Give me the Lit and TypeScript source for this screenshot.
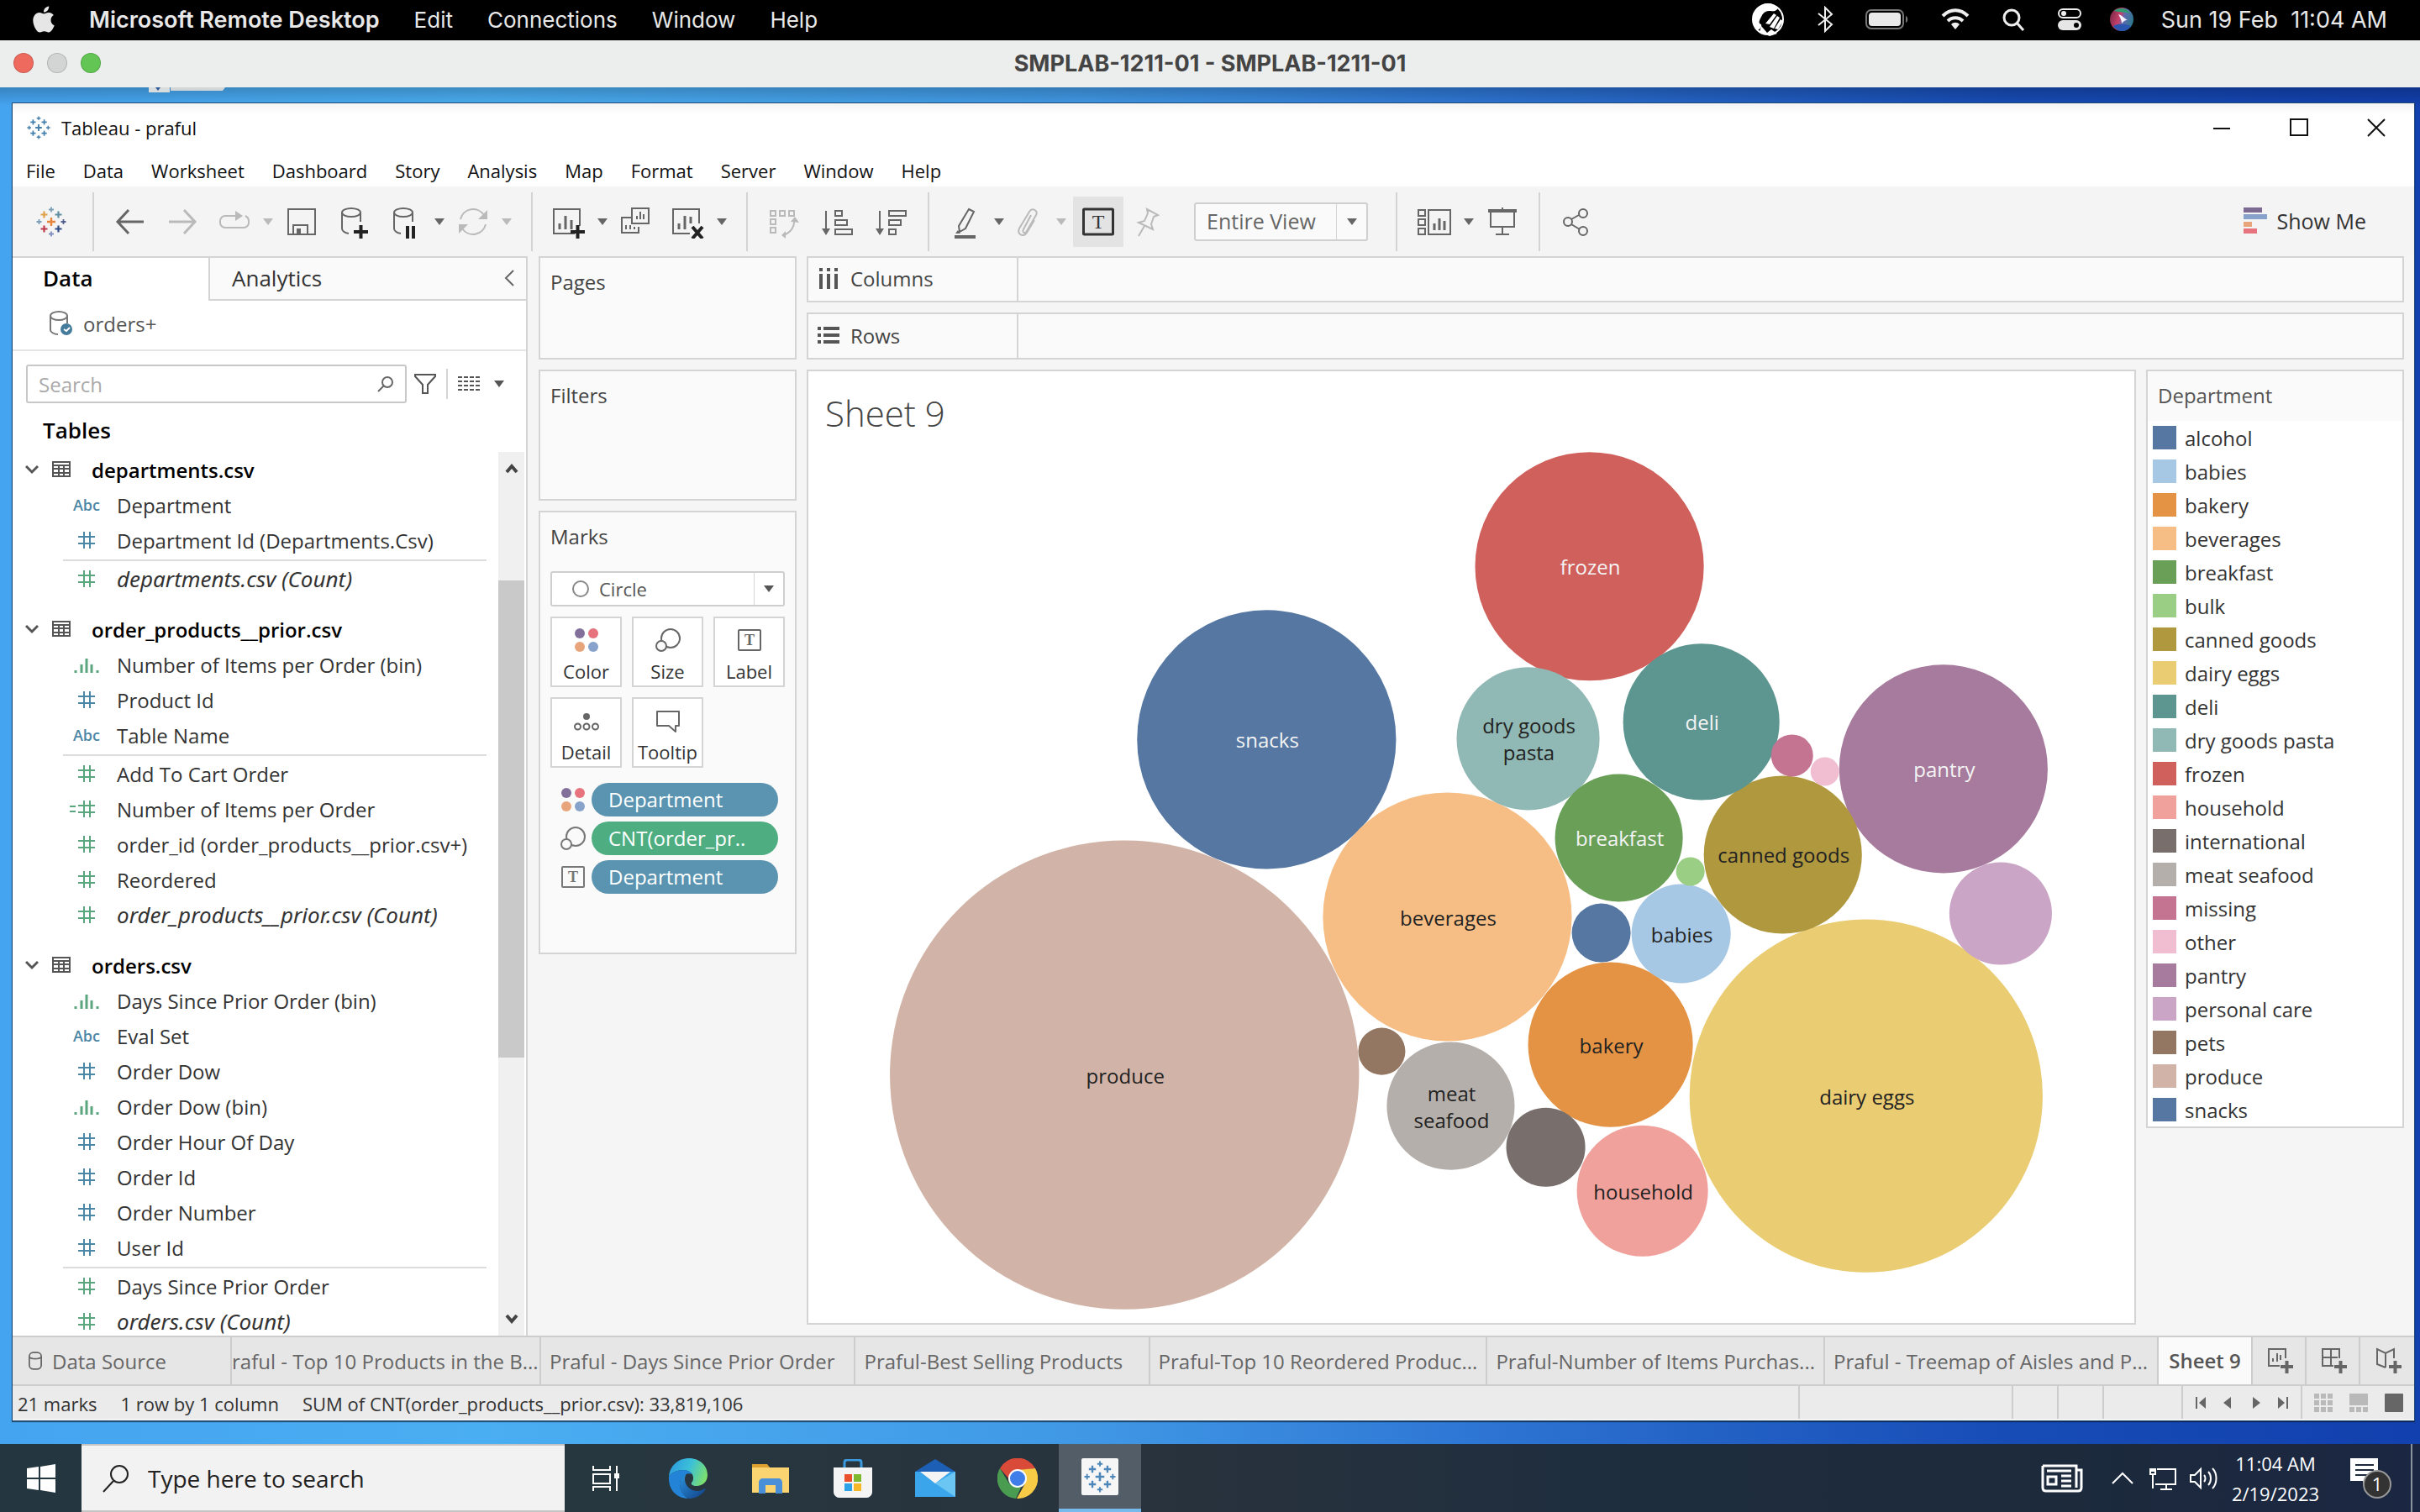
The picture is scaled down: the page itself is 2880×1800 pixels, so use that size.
import { LitElement, html, svg, css } from "lit";
import type { TemplateResult } from "lit";
import { customElement, property } from "lit/decorators.js";
import { classMap } from "lit/directives/class-map.js";
import { styleMap } from "lit/directives/style-map.js";

/* ---------- data ---------- */

const LEGEND: [string, string][] = [
  ["alcohol", "#5577a2"],
  ["babies", "#a7c8e4"],
  ["bakery", "#e49244"],
  ["beverages", "#f6be85"],
  ["breakfast", "#6a9f58"],
  ["bulk", "#9ace85"],
  ["canned goods", "#b0983f"],
  ["dairy eggs", "#eacc73"],
  ["deli", "#5d9590"],
  ["dry goods pasta", "#90b8b4"],
  ["frozen", "#d0605c"],
  ["household", "#f1a19b"],
  ["international", "#786f6d"],
  ["meat seafood", "#b5afab"],
  ["missing", "#c47491"],
  ["other", "#f0bed0"],
  ["pantry", "#a77b9d"],
  ["personal care", "#caa5c5"],
  ["pets", "#947763"],
  ["produce", "#d1b4a7"],
  ["snacks", "#5577a2"],
];
const COLOR = new Map(LEGEND);

interface Bubble {
  name: string;
  x: number;
  y: number;
  r: number;
  lines?: string[];
  light?: boolean;
}

const BUBBLES: Bubble[] = [
  { name: "produce", x: 1339, y: 1279, r: 279, lines: ["produce"] },
  { name: "dairy eggs", x: 2221, y: 1304, r: 210, lines: ["dairy eggs"] },
  { name: "snacks", x: 1508, y: 880, r: 154, lines: ["snacks"], light: true },
  { name: "beverages", x: 1723, y: 1091, r: 148, lines: ["beverages"] },
  { name: "frozen", x: 1892, y: 674, r: 136, lines: ["frozen"], light: true },
  { name: "pantry", x: 2313, y: 915, r: 124, lines: ["pantry"], light: true },
  { name: "bakery", x: 1917, y: 1243, r: 98, lines: ["bakery"] },
  { name: "canned goods", x: 2122, y: 1017, r: 94, lines: ["canned goods"] },
  { name: "deli", x: 2025, y: 859, r: 93, lines: ["deli"], light: true },
  { name: "dry goods pasta", x: 1819, y: 879, r: 85, lines: ["dry goods", "pasta"] },
  { name: "household", x: 1955, y: 1417, r: 78, lines: ["household"] },
  { name: "breakfast", x: 1927, y: 997, r: 76, lines: ["breakfast"], light: true },
  { name: "meat seafood", x: 1727, y: 1316, r: 76, lines: ["meat", "seafood"] },
  { name: "personal care", x: 2381, y: 1087, r: 61 },
  { name: "babies", x: 2001, y: 1111, r: 59, lines: ["babies"] },
  { name: "international", x: 1840, y: 1365, r: 47 },
  { name: "alcohol", x: 1906, y: 1110, r: 35 },
  { name: "pets", x: 1645, y: 1251, r: 28 },
  { name: "missing", x: 2133, y: 899, r: 25 },
  { name: "bulk", x: 2012, y: 1037, r: 17 },
  { name: "other", x: 2172, y: 918, r: 17 },
];

type FieldKind = "abc" | "num" | "measure" | "calc" | "bin";
interface Field {
  kind: FieldKind;
  label: string;
  italic?: boolean;
}
interface TableGroup {
  name: string;
  dimensions: Field[];
  measures: Field[];
}

const f = (kind: FieldKind, label: string, italic = false): Field => ({ kind, label, italic });

const TABLES: TableGroup[] = [
  {
    name: "departments.csv",
    dimensions: [f("abc", "Department"), f("num", "Department Id (Departments.Csv)")],
    measures: [f("measure", "departments.csv (Count)", true)],
  },
  {
    name: "order_products__prior.csv",
    dimensions: [
      f("bin", "Number of Items per Order (bin)"),
      f("num", "Product Id"),
      f("abc", "Table Name"),
    ],
    measures: [
      f("measure", "Add To Cart Order"),
      f("calc", "Number of Items per Order"),
      f("measure", "order_id (order_products__prior.csv+)"),
      f("measure", "Reordered"),
      f("measure", "order_products__prior.csv (Count)", true),
    ],
  },
  {
    name: "orders.csv",
    dimensions: [
      f("bin", "Days Since Prior Order (bin)"),
      f("abc", "Eval Set"),
      f("num", "Order Dow"),
      f("bin", "Order Dow (bin)"),
      f("num", "Order Hour Of Day"),
      f("num", "Order Id"),
      f("num", "Order Number"),
      f("num", "User Id"),
    ],
    measures: [f("measure", "Days Since Prior Order"), f("measure", "orders.csv (Count)", true)],
  },
];

/* ---------- icons ---------- */

const icon = (w: number, h: number, body: unknown, cls = "") => html`<svg
  class="icon ${cls}"
  width=${w}
  height=${h}
  viewBox="0 0 ${w} ${h}"
  fill="none"
  stroke="currentColor"
  stroke-width="2"
  aria-hidden="true"
>
  ${body}
</svg>`;

const caret = html`<svg class="icon caret" width="12" height="8" viewBox="0 0 12 8" aria-hidden="true">
  <path d="M0 0h12L6 8z" fill="currentColor" />
</svg>`;

const plusMark = (x: number, y: number, s: number, color: string, w = 2) =>
  svg`<path d="M${x - s} ${y}h${2 * s}M${x} ${y - s}v${2 * s}" stroke=${color} stroke-width=${w} />`;

const tableauMark = (w: number, mono = "") => html`<svg
  class="icon"
  width=${w}
  height=${w}
  viewBox="0 0 36 36"
  fill="none"
  aria-hidden="true"
>
  ${plusMark(18, 18, 5, mono || "#e8853b", 2.4)} ${plusMark(18, 3.5, 3, mono || "#7ba0b5", 1.8)}
  ${plusMark(18, 32.5, 3, mono || "#7f8fbf", 1.8)} ${plusMark(3.5, 18, 3, mono || "#7ba0b5", 1.8)}
  ${plusMark(32.5, 18, 3, mono || "#54608f", 1.8)} ${plusMark(9.5, 9.5, 4, mono || "#e0a04a", 2.2)}
  ${plusMark(26.5, 9.5, 4, mono || "#5f8fa0", 2.2)} ${plusMark(9.5, 26.5, 4, mono || "#c03a4e", 2.2)}
  ${plusMark(26.5, 26.5, 4, mono || "#2e4b86", 2.2)}
</svg>`;

const TOOL: Record<string, TemplateResult> = {
  back: icon(40, 40, svg`<path d="M5 20h31M18 6L5 20l13 14" stroke-width="3" />`),
  forward: icon(40, 40, svg`<path d="M4 20h31M22 6l13 14-13 14" stroke-width="3" />`),
  replay: icon(40, 40, svg`<path d="M22 13H9a6 6 0 0 0-6 6v2a6 6 0 0 0 6 6h22a6 6 0 0 0 6-6v-2c0-3-2-5-4-6" /><path d="M21 7l9 6-9 6z" fill="currentColor" stroke="none" />`),
  save: icon(40, 40, svg`<path d="M4 5h32v30H4zM10 35V24h17v11" /><path d="M14 28h5v7h-5z" fill="currentColor" stroke="none" />`),
  addSource: icon(40, 40, svg`<ellipse cx="17" cy="9" rx="11" ry="5" /><path d="M6 9v19c0 3 3 5 8 6M28 9v11" /><path d="M20 32h17M28.500 24v17" stroke="#222" stroke-width="4" />`),
  pause: icon(40, 40, svg`<ellipse cx="17" cy="9" rx="11" ry="5" /><path d="M6 9v19c0 3 3 5 8 6M28 9v11" /><path d="M22 25v15M29 25v15" stroke="#222" stroke-width="4" />`),
  refresh: icon(40, 40, svg`<path d="M5 17A15.500 15.500 0 0 1 33 12M35 23A15.500 15.500 0 0 1 7 28" /><path d="M37 6v11H26zM3 34V23h11z" fill="currentColor" stroke="none" />`),
  newSheet: icon(40, 40, svg`<path d="M27 34H2V5h31v20" /><path d="M9 29v-7M16 29V13M23 29v-11" stroke-width="3" /><path d="M22 32h17M30.500 24v17" stroke="#222" stroke-width="4" />`),
  duplicate: icon(40, 40, svg`<path d="M15 4h20v18H15zM15 15H3v18h20v-7" /><path d="M21 17v-4M25 17V8M29 17v-6M8 29v-5M13 29v-5M18 29v-3" />`),
  clear: icon(40, 40, svg`<path d="M22 34H2V5h31v17" /><path d="M9 29v-7M16 29V13M23 22v-8" stroke-width="3" /><path d="M25 26l12 14M37 26L25 40" stroke="#222" stroke-width="4" />`),
  swap: icon(40, 40, svg`<path d="M4 7h6v6H4zM15 7h6v6h-6zM26 7h6v6h-6zM4 17h6v6H4zM4 27h6v6H4zM32 18c1 8-4 15-13 18" /><path d="M28 20l5-6 5 7zM22 31l-5 5 5 4z" fill="currentColor" stroke="none" />`),
  sortAsc: icon(40, 40, svg`<path d="M6 7v24" /><path d="M1 28h10L6 36z" fill="currentColor" stroke="none" /><path d="M17 7h8v6h-8zM17 18h14v6H17zM17 29h20v6H17z" />`),
  sortDesc: icon(40, 40, svg`<path d="M6 7v24" /><path d="M1 28h10L6 36z" fill="currentColor" stroke="none" /><path d="M17 7h20v6H17zM17 18h14v6H17zM17 29h8v6h-8z" />`),
  highlight: icon(40, 40, svg`<path d="M24 5l6 3-10 20-7 4-1-7z" /><path d="M11 30l-3 4h6z" fill="currentColor" stroke="none" /><path d="M7 38h25" stroke-width="4" />`),
  clip: icon(40, 40, svg`<path d="M24 12l-9 17c-2 4 2 6 4 2l11-19c3-6-5-9-8-4L10 28c-3 7 5 11 9 5l9-15" />`),
  label: icon(40, 40, svg`<rect x="2.500" y="5" width="35" height="30" rx="1" stroke-width="3" /><text x="20" y="28" text-anchor="middle" class="serif" font-size="24" fill="currentColor" stroke="none">T</text>`),
  pin: icon(40, 40, svg`<path d="M20 5l13 7-5 2-3 9 2 6-17-8 7-2 4-9zM17 25l-7 12" />`),
  cards: icon(42, 40, svg`<path d="M2 6h8v7H2zM2 17h8v7H2zM2 28h8v7H2zM14 6h26v29H14z" /><path d="M21 30v-8M27 30V16M33 30V19" stroke-width="3" />`),
  present: icon(40, 40, svg`<path d="M3 7h34" stroke-width="4" /><path d="M6 7v19h28V7M20 26v9M12 35h16M20 3v4" />`),
  share: icon(40, 40, svg`<circle cx="10" cy="20" r="5" /><circle cx="28" cy="10" r="5" /><circle cx="28" cy="31" r="5" /><path d="M14 17l9-5M14 23l10 6" />`),
};

const markColor = html`<svg class="icon" width="30" height="30" viewBox="0 0 30 30" aria-hidden="true">
  <circle cx="7" cy="7" r="6" fill="#83709a" /><circle cx="23" cy="7" r="6" fill="#e6737d" />
  <circle cx="7" cy="23" r="6" fill="#e8a57c" /><circle cx="23" cy="23" r="6" fill="#87a3cb" />
</svg>`;
const markSize = icon(30, 30, svg`<circle cx="18" cy="13" r="11" /><circle cx="7" cy="22" r="6" fill="#fafafa" />`);
const markLabel = icon(30, 30, svg`<rect x="2" y="3" width="26" height="24" rx="1" /><text x="15" y="21" text-anchor="middle" class="serif" font-size="18" font-weight="bold" fill="currentColor" stroke="none">T</text>`);
const markDetail = icon(30, 30, svg`<circle cx="15" cy="10" r="4" fill="currentColor" stroke="none" /><circle cx="4.500" cy="22" r="3.500" /><circle cx="15" cy="22" r="3.500" /><circle cx="25.500" cy="22" r="3.500" />`);
const markTooltip = icon(30, 30, svg`<path d="M2 4h26v17h-4v7l-8-7H2z" stroke-linejoin="round" />`);

const dbIcon = (w: number, h: number) => html`<svg class="icon" width=${w} height=${h} viewBox="0 0 18 24" fill="none" stroke="currentColor" stroke-width="2" aria-hidden="true">
  <rect x="1" y="1" width="16" height="22" rx="5" /><path d="M1 7c3 3 13 3 16 0" />
</svg>`;

const hash = icon(22, 22, svg`<path d="M1 7h20M1 15h20M8 1v20M15 1v20" />`);
const hashCalc = icon(31, 22, svg`<path d="M10 7h20M10 15h20M17 1v20M24 1v20M0 8h7M0 14h7" />`);
const binIcon = icon(30, 22, svg`<path d="M2 18v3M9 11v10M15 4v17M21 11v10M28 18v3" stroke-width="3" />`);
const tableIcon = icon(22, 20, svg`<path d="M1 1h20v17H1zM1 5h20M1 9h20M1 14h20M8 5v13M14 5v13" />`);
const chevron = icon(16, 12, svg`<path d="M1 2l7 7 7-7" stroke-width="3" />`);

/* ---------- shared styles ---------- */

const shared = css`
  *,
  *::before,
  *::after {
    box-sizing: border-box;
  }
  button,
  input,
  select {
    font: inherit;
    color: inherit;
    background: none;
    border: 0;
    border-radius: 0;
    padding: 0;
    margin: 0;
  }
  ul {
    list-style: none;
    margin: 0;
    padding: 0;
  }
  h1,
  h2,
  h3 {
    margin: 0;
    font: inherit;
  }
  .icon {
    display: block;
    flex: none;
  }
  .serif {
    font-family: "Liberation Serif", serif;
  }
`;

/* ---------- host menu bar ---------- */

@customElement("mac-menu-bar")
class MacMenuBar extends LitElement {
  static styles = [
    shared,
    css`
      :host {
        display: block;
        font-family: Inter, sans-serif;
        font-size: 26px;
      }
      .bar {
        height: 48px;
        background: #000;
        color: #e8e8e8;
        display: flex;
        align-items: center;
        justify-content: space-between;
        padding: 0 39px 2px;
      }
      .menus,
      .status,
      .clock {
        display: flex;
        align-items: center;
      }
      .menus {
        gap: 41px;
      }
      .status {
        gap: 38px;
      }
      .clock {
        gap: 32px;
      }
      .app {
        font-size: 27px;
        font-weight: 600;
      }
      .time {
        font-size: 27px;
        white-space: pre;
      }
      .title {
        height: 56px;
        background: #eceeed;
        display: grid;
        grid-template-columns: 1fr auto 1fr;
        align-items: center;
        padding: 0 16px 2px;
        color: #444;
        font-size: 27px;
        font-weight: 700;
      }
      .lights {
        display: flex;
        gap: 16px;
      }
      .light {
        width: 24px;
        height: 24px;
        border-radius: 50%;
        border: 1px solid rgb(0 0 0 / 15%);
      }
      .close {
        background: #ee6a5f;
      }
      .minimise {
        background: #d3d5d4;
      }
      .zoom {
        background: #62c554;
      }
    `,
  ];

  render() {
    return html`
      <nav class="bar" aria-label="System menu">
        <div class="menus">
          <svg class="icon" width="26" height="32" viewBox="2 0 20 24" fill="#e6e6e6" aria-hidden="true">
            <path
              d="M12.152 6.896c-.948 0-2.415-1.078-3.960-1.040-2.040.027-3.910 1.183-4.961 3.014-2.117 3.675-.546 9.103 1.519 12.090 1.013 1.454 2.208 3.090 3.792 3.039 1.520-.065 2.090-.987 3.935-.987 1.831 0 2.350.987 3.960.948 1.637-.026 2.676-1.480 3.676-2.948 1.156-1.688 1.636-3.325 1.662-3.415-.039-.013-3.182-1.221-3.220-4.857-.026-3.040 2.480-4.494 2.597-4.559-1.429-2.090-3.623-2.324-4.390-2.376-2-.156-3.675 1.090-4.610 1.090zM15.530 3.830c.843-1.012 1.400-2.427 1.245-3.830-1.207.052-2.662.805-3.532 1.818-.780.896-1.454 2.338-1.273 3.714 1.338.104 2.715-.688 3.559-1.701"
            />
          </svg>
          <button class="app">Microsoft Remote Desktop</button>
          <button>Edit</button>
          <button>Connections</button>
          <button>Window</button>
          <button>Help</button>
        </div>
        <div class="status">
          <svg class="icon" width="40" height="40" viewBox="0 0 40 40" aria-hidden="true">
            <circle cx="20" cy="20" r="18" fill="#000" stroke="#fff" stroke-width="2" />
            <path d="M20 1A19 19 0 0 0 7 33c3-1 6-3 5-7-4-1-2-5-1-7 2-4 4-10 12-9 6 1 8-1 9-4A19 19 0 0 0 20 1z" fill="#fff" />
            <path d="M17 25L27 13l3 2-8 11zM22 29l9-13 3 2-7 13zM28 31l7-11 3 2-6 10zM12 28l7 8 5-4 7 5-9 3-12-5z" fill="#fff" />
          </svg>
          <svg class="icon" width="20" height="32" viewBox="0 0 20 32" fill="none" stroke="#eee" stroke-width="2" aria-hidden="true">
            <path d="M2 9l16 13-8 8V2l8 8L2 23" />
          </svg>
          <svg class="icon" width="52" height="26" viewBox="0 0 52 26" fill="none" aria-hidden="true">
            <rect x="1" y="2" width="44" height="22" rx="6" stroke="#777" stroke-width="2" />
            <rect x="4" y="5" width="38" height="16" rx="4" fill="#eaeaea" />
            <path d="M48 9c3 1 3 7 0 8z" fill="#777" />
          </svg>
          <svg class="icon" width="34" height="26" viewBox="0 0 34 26" fill="none" stroke="#eee" stroke-width="4" aria-hidden="true">
            <path d="M2 9c9-9 21-9 30 0M8 15c5-5 13-5 18 0" />
            <path d="M17 25l-5-6c3-3 7-3 10 0z" fill="#eee" stroke="none" />
          </svg>
          <svg class="icon" width="28" height="28" viewBox="0 0 28 28" fill="none" stroke="#eee" stroke-width="3" aria-hidden="true">
            <circle cx="12" cy="12" r="9" /><path d="M18 18l8 9" />
          </svg>
          <div class="clock">
            <svg class="icon" width="30" height="28" viewBox="0 0 30 28" fill="none" aria-hidden="true">
              <rect x="2" y="2" width="26" height="10" rx="5" stroke="#eee" stroke-width="2" />
              <circle cx="8" cy="7" r="3" fill="#eee" />
              <rect x="1" y="15" width="28" height="12" rx="6" fill="#e6e6e6" />
              <circle cx="23" cy="21" r="3" fill="#000" />
            </svg>
            <svg class="icon" width="30" height="30" viewBox="0 0 30 30" aria-hidden="true">
              <defs>
                <linearGradient id="orb" x1="0" y1=".3" x2="1" y2=".6">
                  <stop offset="0" stop-color="#7a2a4a" />
                  <stop offset=".4" stop-color="#c8406a" />
                  <stop offset=".6" stop-color="#5a6ab0" />
                  <stop offset="1" stop-color="#2a7a8a" />
                </linearGradient>
              </defs>
              <circle cx="15" cy="15" r="14" fill="url(#orb)" />
              <path d="M6 5c5-5 16-4 19 3-6-2-12-1-19-3z" fill="#2f9a72" />
              <path d="M5 23c4-3 15-3 21 0-5 8-16 8-21 0z" fill="#2a56b0" />
              <path d="M11 9c4 1 6 4 11 7-4 0-5 2-7 4 0-4-2-7-4-11z" fill="#f4f0ff" />
            </svg>
            <span class="time">Sun 19 Feb  11:04 AM</span>
          </div>
        </div>
      </nav>
      <div class="title">
        <div class="lights">
          <button class="light close" aria-label="Close"></button>
          <button class="light minimise" aria-label="Minimise"></button>
          <button class="light zoom" aria-label="Zoom"></button>
        </div>
        <span>SMPLAB-1211-01 - SMPLAB-1211-01</span>
      </div>
    `;
  }
}

/* ---------- toolbar ---------- */

@customElement("sheet-toolbar")
class SheetToolbar extends LitElement {
  static styles = [
    shared,
    css`
      :host {
        display: block;
      }
      .bar {
        height: 83px;
        background: #f4f4f4;
        display: flex;
        align-items: center;
        padding: 0 57px 0 28px;
        color: #666;
      }
      .home {
        margin-right: 8px;
      }
      .group {
        display: flex;
        align-items: center;
        gap: 22px;
      }
      .wide {
        gap: 24px;
      }
      .tight {
        gap: 8px;
      }
      .sep {
        width: 2px;
        height: 70px;
        margin: 0 23px;
        background: #d4d4d4;
      }
      .split {
        display: flex;
        align-items: center;
        gap: 14px;
        margin-right: -8px;
      }
      .tight .split,
      .split:last-child {
        margin-right: 0;
      }
      .off {
        color: #bababa;
      }
      .on {
        background: #e3e3e3;
        padding: 10px;
        color: #333;
      }
      .fit {
        display: flex;
        align-items: center;
        height: 46px;
        width: 207px;
        margin: 0 10px 0 36px;
        background: #fafafa;
        border: 2px solid #cfcfcf;
        border-radius: 3px;
        font-size: 25px;
      }
      .fit select {
        appearance: none;
        flex: 1;
        min-width: 0;
        height: 100%;
        padding: 0 0 2px 13px;
      }
      .fit .drop {
        display: grid;
        place-items: center;
        width: 36px;
        height: 100%;
        border-left: 1px solid #d4d4d4;
      }
      .show {
        margin-left: auto;
        display: flex;
        align-items: center;
        gap: 12px;
        padding-bottom: 2px;
        color: #333;
        font-size: 25px;
      }
    `,
  ];

  private tool(name: string, label: string, opts: { split?: boolean; off?: boolean; on?: boolean } = {}) {
    const cls = { off: !!opts.off, on: !!opts.on };
    const button = html`<button class=${classMap(cls)} aria-label=${label}>${TOOL[name]}</button>`;
    if (!opts.split) return button;
    return html`<div class="split">
      ${button}<button class=${classMap(cls)} aria-label="${label} options">${caret}</button>
    </div>`;
  }

  render() {
    const sep = html`<span class="sep"></span>`;
    return html`<div class="bar" role="toolbar">
      <button class="home" aria-label="Start page">${tableauMark(36)}</button>
      ${sep}
      <div class="group">
        ${this.tool("back", "Undo")} ${this.tool("forward", "Redo", { off: true })}
        ${this.tool("replay", "Replay", { off: true, split: true })} ${this.tool("save", "Save")}
        ${this.tool("addSource", "New data source")} ${this.tool("pause", "Pause updates", { split: true })}
        ${this.tool("refresh", "Run update", { off: true, split: true })}
      </div>
      ${sep}
      <div class="group">
        ${this.tool("newSheet", "New worksheet", { split: true })} ${this.tool("duplicate", "Duplicate")}
        ${this.tool("clear", "Clear sheet", { split: true })}
      </div>
      ${sep}
      <div class="group wide">
        ${this.tool("swap", "Swap", { off: true })} ${this.tool("sortAsc", "Sort ascending")}
        ${this.tool("sortDesc", "Sort descending")}
      </div>
      ${sep}
      <div class="group tight">
        ${this.tool("highlight", "Highlight", { split: true })}
        ${this.tool("clip", "Group members", { off: true, split: true })}
        ${this.tool("label", "Show mark labels", { on: true })} ${this.tool("pin", "Fix axes", { off: true })}
      </div>
      <div class="fit">
        <select aria-label="Fit">
          <option>Entire View</option>
        </select>
        <span class="drop">${caret}</span>
      </div>
      ${sep}
      <div class="group">
        ${this.tool("cards", "Show cards", { split: true })} ${this.tool("present", "Presentation mode")}
      </div>
      ${sep} ${this.tool("share", "Share")}
      <button class="show">
        <svg class="icon" width="28" height="32" viewBox="0 0 28 32" aria-hidden="true">
          <path d="M0 0h22v6H0z" fill="#7d6a92" />
          <path d="M0 8h28v6H0z" fill="#86a2ca" />
          <path d="M0 17h10v6H0z" fill="#e8a57c" />
          <path d="M0 25h16v6H0z" fill="#e6737d" />
        </svg>
        Show Me
      </button>
    </div>`;
  }
}

/* ---------- data pane ---------- */

@customElement("data-pane")
class DataPane extends LitElement {
  static styles = [
    shared,
    css`
      :host {
        display: flex;
        flex-direction: column;
        min-height: 0;
        background: #fff;
        border-top: 2px solid #d4d4d4;
        border-right: 2px solid #d4d4d4;
        color: #333;
        font-size: 24px;
      }
      .tabs {
        display: flex;
        height: 51px;
        font-size: 26px;
      }
      .data {
        width: 233px;
        padding: 0 0 4px 36px;
        text-align: left;
        color: #000;
        font-weight: 600;
      }
      .analytics {
        flex: 1;
        display: flex;
        align-items: center;
        justify-content: space-between;
        padding: 0 14px 2px 26px;
        background: #fafafa;
        border-left: 2px solid #d4d4d4;
        border-bottom: 2px solid #d4d4d4;
      }
      .source {
        height: 60px;
        display: flex;
        align-items: center;
        gap: 12px;
        padding: 0 0 4px 44px;
        border-bottom: 2px solid #e4e4e4;
        color: #555;
      }
      .find {
        height: 68px;
        padding: 10px 26px 0 16px;
        display: flex;
        align-items: center;
        gap: 9px;
        color: #555;
      }
      .box {
        display: flex;
        align-items: center;
        flex: 1;
        height: 46px;
        padding: 0 13px;
        border: 2px solid #c8c8c8;
        border-radius: 3px;
      }
      .box input {
        flex: 1;
        min-width: 0;
        outline: 0;
      }
      .box input::placeholder {
        color: #aaa;
      }
      .rule {
        width: 2px;
        height: 36px;
        margin: 0 3px;
        background: #d4d4d4;
      }
      .view {
        display: flex;
        align-items: center;
        gap: 17px;
      }
      .heading {
        height: 52px;
        line-height: 52px;
        padding-left: 36px;
        font-size: 26px;
        font-weight: 600;
        color: #000;
      }
      .scroller {
        flex: 1;
        min-height: 0;
        display: flex;
        overflow: hidden;
      }
      .tree {
        flex: 1;
        min-width: 0;
        font-size: 24px;
      }
      .group + .group {
        margin-top: 18px;
      }
      .name {
        display: flex;
        align-items: center;
        height: 42px;
        padding-left: 15px;
        color: #000;
        font-weight: 600;
        white-space: nowrap;
      }
      .name .glyphs {
        display: flex;
        align-items: center;
        gap: 16px;
        width: 79px;
        color: #555;
      }
      .field {
        display: flex;
        align-items: center;
        height: 42px;
        padding-left: 66px;
        white-space: nowrap;
      }
      .kind {
        display: flex;
        justify-content: center;
        width: 44px;
        margin-right: 14px;
        color: #4b87a6;
      }
      .green {
        color: #5aa67f;
      }
      .calc {
        justify-content: flex-end;
        padding-right: 11px;
      }
      .abc {
        font-size: 18px;
        font-weight: 600;
      }
      .italic {
        font-family: "Noto Sans", sans-serif;
        font-size: 26px;
        font-style: italic;
      }
      .split {
        height: 4px;
        margin: 0 14px 0 60px;
        border-bottom: 2px solid #dcdcdc;
      }
      .bar {
        width: 31px;
        margin-right: 2px;
        background: #f0f0f0;
        color: #444;
        display: flex;
        flex-direction: column;
        align-items: center;
        justify-content: space-between;
        padding: 12px 0;
        position: relative;
      }
      .thumb {
        position: absolute;
        left: 0;
        right: 0;
        top: 14.5%;
        height: 54%;
        background: #c9c9c9;
      }
    `,
  ];

  private kind(kind: FieldKind) {
    switch (kind) {
      case "abc":
        return html`<span class="kind abc">Abc</span>`;
      case "num":
        return html`<span class="kind">${hash}</span>`;
      case "measure":
        return html`<span class="kind green">${hash}</span>`;
      case "calc":
        return html`<span class="kind green calc">${hashCalc}</span>`;
      case "bin":
        return html`<span class="kind green">${binIcon}</span>`;
    }
  }

  private field(item: Field) {
    return html`<li class="field">
      ${this.kind(item.kind)}<span class=${classMap({ italic: !!item.italic })}>${item.label}</span>
    </li>`;
  }

  render() {
    return html`
      <div class="tabs">
        <button class="data">Data</button>
        <button class="analytics">
          Analytics
          <svg class="icon" width="12" height="20" viewBox="0 0 12 20" fill="none" stroke="#666" stroke-width="2" aria-hidden="true">
            <path d="M11 1l-9 9 9 9" />
          </svg>
        </button>
      </div>
      <div class="source">
        <svg class="icon" width="28" height="30" viewBox="0 0 28 30" fill="none" stroke="#777" stroke-width="2" aria-hidden="true">
          <ellipse cx="11" cy="6" rx="10" ry="5" /><path d="M1 6v17c0 2 4 5 9 5M21 6v9" />
          <circle cx="20" cy="22" r="7" fill="#457c9c" stroke="none" /><path d="M17 22l3 2 4-4" stroke="#fff" />
        </svg>
        orders+
      </div>
      <div class="find">
        <label class="box">
          <input type="text" placeholder="Search" aria-label="Search fields" />
          <svg class="icon" width="20" height="20" viewBox="0 0 20 20" fill="none" stroke="#666" stroke-width="2" aria-hidden="true">
            <circle cx="12" cy="8" r="6" /><path d="M8 12l-7 7" />
          </svg>
        </label>
        <button aria-label="Filter">
          ${icon(26, 26, svg`<path d="M1 2h24v2l-9 10v10h-6V14L1 4z" />`)}
        </button>
        <span class="rule"></span>
        <button class="view" aria-label="View options">
          ${icon(26, 20, svg`<path d="M0 2h26M0 7h26M0 12h26M0 17h26" stroke-dasharray="5 2" />`)} ${caret}
        </button>
      </div>
      <h2 class="heading">Tables</h2>
      <div class="scroller">
        <div class="tree">
          ${TABLES.map(
            (t) => html`<section class="group">
              <h3 class="name"><span class="glyphs">${chevron}${tableIcon}</span>${t.name}</h3>
              <ul>
                ${t.dimensions.map((d) => this.field(d))}
              </ul>
              <div class="split"></div>
              <ul>
                ${t.measures.map((m) => this.field(m))}
              </ul>
            </section>`
          )}
        </div>
        <div class="bar">
          ${icon(16, 14, svg`<path d="M2 12l6-7 6 7" stroke-width="4" />`)}
          <span class="thumb"></span>
          ${icon(16, 14, svg`<path d="M2 2l6 7 6-7" stroke-width="4" />`)}
        </div>
      </div>
    `;
  }
}

/* ---------- cards ---------- */

@customElement("shelf-cards")
class ShelfCards extends LitElement {
  static styles = [
    shared,
    css`
      :host {
        display: flex;
        flex-direction: column;
        gap: 12px;
        color: #444;
        font-size: 24px;
      }
      .card {
        background: #fafafa;
        border: 2px solid #d4d4d4;
        padding: 12px 12px;
        line-height: 34px;
      }
      .pages {
        height: 123px;
      }
      .filters {
        height: 156px;
      }
      .marks {
        height: 528px;
      }
      .type {
        display: flex;
        align-items: center;
        height: 42px;
        margin: 24px 0 12px;
        padding-left: 24px;
        border: 2px solid #cfcfcf;
        border-radius: 3px;
        background: #fff;
        font-size: 22px;
        color: #555;
      }
      .type select {
        appearance: none;
        flex: 1;
        min-width: 0;
        height: 100%;
        padding-left: 12px;
      }
      .drop {
        display: grid;
        place-items: center;
        width: 35px;
        height: 100%;
        border-left: 1px solid #d4d4d4;
      }
      .encodings {
        display: grid;
        grid-template-columns: repeat(3, 1fr);
        gap: 12px;
      }
      .encoding {
        display: flex;
        flex-direction: column;
        align-items: center;
        gap: 7px;
        height: 84px;
        padding-top: 11px;
        border: 2px solid #d4d4d4;
        background: #fff;
        color: #333;
        font-size: 22px;
        line-height: 30px;
      }
      .encoding .icon {
        color: #666;
      }
      .pills {
        margin-top: 18px;
        display: grid;
        gap: 6px;
      }
      .row {
        display: flex;
        align-items: center;
        gap: 7px;
        padding: 0 8px 0 12px;
        color: #777;
      }
      .pill {
        flex: 1;
        height: 40px;
        padding-left: 20px;
        border-radius: 20px;
        background: #5b94b0;
        color: #fff;
        line-height: 38px;
        text-align: left;
      }
      .agg {
        background: #4eae82;
      }
    `,
  ];

  render() {
    const enc = (label: string, glyph: TemplateResult) =>
      html`<button class="encoding">${glyph}${label}</button>`;
    const pill = (label: string, glyph: TemplateResult, agg = false) =>
      html`<li class="row">${glyph}<button class=${classMap({ pill: true, agg })}>${label}</button></li>`;
    return html`
      <section class="card pages"><h2>Pages</h2></section>
      <section class="card filters"><h2>Filters</h2></section>
      <section class="card marks">
        <h2>Marks</h2>
        <div class="type">
          ${icon(20, 20, svg`<circle cx="10" cy="10" r="9" stroke="#888" />`)}
          <select aria-label="Mark type">
            <option>Circle</option>
          </select>
          <span class="drop">${caret}</span>
        </div>
        <div class="encodings">
          ${enc("Color", markColor)} ${enc("Size", markSize)} ${enc("Label", markLabel)}
          ${enc("Detail", markDetail)} ${enc("Tooltip", markTooltip)}
        </div>
        <ul class="pills">
          ${pill("Department", markColor)} ${pill("CNT(order_pr..", markSize, true)}
          ${pill("Department", markLabel)}
        </ul>
      </section>
    `;
  }
}

/* ---------- worksheet ---------- */

@customElement("bubble-sheet")
class BubbleSheet extends LitElement {
  static styles = [
    shared,
    css`
      :host {
        display: grid;
        grid-template-columns: minmax(0, 1fr) 307px;
        grid-template-rows: 55px 56px minmax(0, 1fr);
        gap: 12px;
        min-width: 0;
        min-height: 0;
        color: #444;
        font-size: 24px;
      }
      .shelf {
        grid-column: 1 / -1;
        display: flex;
        background: #fafafa;
        border: 2px solid #d4d4d4;
      }
      .shelf h2 {
        display: flex;
        align-items: center;
        gap: 13px;
        width: 250px;
        padding: 0 0 2px 11px;
        border-right: 2px solid #d4d4d4;
      }
      .view {
        display: flex;
        flex-direction: column;
        min-height: 0;
        background: #fff;
        border: 2px solid #d4d4d4;
      }
      .title {
        padding: 20px 20px 10px;
        font-size: 42px;
        line-height: 60px;
        font-weight: 300;
      }
      .chart {
        flex: 1;
        min-height: 0;
        width: 100%;
        display: block;
      }
      .mark {
        font-size: 24px;
        fill: #222;
        text-anchor: middle;
      }
      .light {
        fill: #f4f4f4;
      }
      .legend {
        align-self: start;
        background: #fff;
        border: 2px solid #d4d4d4;
      }
      .legend h2 {
        height: 59px;
        line-height: 58px;
        padding-left: 12px;
        background: #fafafa;
        color: #555;
      }
      .legend li {
        display: flex;
        align-items: center;
        gap: 10px;
        height: 40px;
        padding-left: 6px;
        color: #333;
      }
      .swatch {
        width: 28px;
        height: 28px;
      }
    `,
  ];

  private bubble(b: Bubble) {
    const lines = b.lines ?? [];
    const top = b.y + 10 - (lines.length - 1) * 16;
    return svg`<circle cx=${b.x} cy=${b.y} r=${b.r} fill=${COLOR.get(b.name) ?? "#ccc"} />
      ${lines.map(
        (line, i) =>
          svg`<text class=${b.light ? "mark light" : "mark"} x=${b.x + 1} y=${top + i * 32}>${line}</text>`
      )}`;
  }

  render() {
    return html`
      <section class="shelf">
        <h2>
          <svg class="icon" width="26" height="26" viewBox="0 0 26 26" fill="#555" aria-hidden="true">
            <path d="M2 0h4v4H2zM2 7h4v18H2zM11 0h4v4h-4zM11 7h4v18h-4zM20 0h4v4h-4zM20 7h4v18h-4z" />
          </svg>
          Columns
        </h2>
      </section>
      <section class="shelf">
        <h2>
          <svg class="icon" width="26" height="26" viewBox="0 0 26 26" fill="#555" aria-hidden="true">
            <path d="M0 3h4v4H0zM7 3h19v4H7zM0 11h4v4H0zM7 11h19v4H7zM0 19h4v4H0zM7 19h19v4H7z" />
          </svg>
          Rows
        </h2>
      </section>
      <section class="view">
        <h1 class="title">Sheet 9</h1>
        <svg class="chart" viewBox="963 532 1577 1042" role="img" aria-label="Items ordered by department">
          ${BUBBLES.map((b) => this.bubble(b))}
        </svg>
      </section>
      <aside class="legend">
        <h2>Department</h2>
        <ul>
          ${LEGEND.map(
            ([name, color]) =>
              html`<li><span class="swatch" style=${styleMap({ background: color })}></span>${name}</li>`
          )}
        </ul>
      </aside>
    `;
  }
}

/* ---------- sheet tabs and status ---------- */

@customElement("sheet-tabs")
class SheetTabs extends LitElement {
  static styles = [
    shared,
    css`
      :host {
        display: block;
        color: #666;
      }
      .tabs {
        display: flex;
        height: 60px;
        background: #e6e6e6;
        border-top: 2px solid #cdcdcd;
        border-bottom: 2px solid #cdcdcd;
        font-size: 24px;
      }
      .tab {
        display: flex;
        align-items: center;
        padding: 0 10px;
        border-right: 2px solid #cdcdcd;
        white-space: nowrap;
      }
      .source {
        width: 261px;
        gap: 12px;
        padding-left: 19px;
      }
      .first {
        width: 368px;
        padding: 0;
      }
      .w1 {
        flex: 376;
      }
      .w2 {
        flex: 350;
      }
      .w3 {
        flex: 400;
      }
      .active {
        background: #fafafa;
        color: #555;
        font-weight: 600;
        flex: none;
        width: 112px;
        justify-content: center;
        padding: 0 0 2px;
      }
      .new {
        flex: none;
        width: 64px;
        padding: 0 0 0 4px;
        justify-content: center;
      }
      .new:last-child {
        border-right: 0;
      }
      .status {
        display: flex;
        height: 41px;
        background: #ebebeb;
        border-bottom: 2px solid #f4f4f4;
        color: #333;
        font-size: 22px;
      }
      .facts {
        flex: 1;
        display: flex;
        align-items: center;
        gap: 28px;
        padding: 2px 0 0 6px;
        white-space: nowrap;
      }
      .cell {
        display: flex;
        align-items: center;
        justify-content: center;
        border-left: 2px solid #cdcdcd;
      }
      .c1 {
        width: 254px;
      }
      .c2 {
        width: 54px;
      }
      .c3 {
        width: 94px;
      }
      .nav {
        width: 142px;
        gap: 18px;
        color: #666;
      }
      .modes {
        width: 135px;
        gap: 20px;
      }
    `,
  ];

  render() {
    const nav = (label: string, body: unknown, w = 14) =>
      html`<button aria-label=${label}>
        <svg class="icon" width=${w} height="14" viewBox="0 0 ${w} 14" fill="currentColor" aria-hidden="true">${body}</svg>
      </button>`;
    const plus = svg`<path d="M16 23h15M23.500 16v15" stroke-width="4" />`;
    return html`
      <div class="tabs">
        <button class="tab source">${dbIcon(16, 22)}Data Source</button>
        <button class="tab first">raful - Top 10 Products in the B...</button>
        <button class="tab w1">Praful - Days Since Prior Order</button>
        <button class="tab w2">Praful-Best Selling Products</button>
        <button class="tab w3">Praful-Top 10 Reordered Produc...</button>
        <button class="tab w3">Praful-Number of Items Purchas...</button>
        <button class="tab w3">Praful - Treemap of Aisles and P...</button>
        <button class="tab active">Sheet 9</button>
        <button class="tab new" aria-label="New worksheet">
          ${icon(32, 32, svg`<path d="M15 22H2V2h20v11" /><path d="M7 17v-4M12 17V7M16 15V9" />${plus}`)}
        </button>
        <button class="tab new" aria-label="New dashboard">
          ${icon(32, 32, svg`<path d="M15 22H2V2h20v11M12 2v20M2 12h18" />${plus}`)}
        </button>
        <button class="tab new" aria-label="New story">
          ${icon(32, 32, svg`<path d="M12 24L2 20V2l10 5 10-5v11M12 7v17" />${plus}`)}
        </button>
      </div>
      <div class="status">
        <div class="facts">
          <span>21 marks</span><span>1 row by 1 column</span>
          <span>SUM of CNT(order_products__prior.csv): 33,819,106</span>
        </div>
        <span class="cell c1"></span><span class="cell c2"></span><span class="cell c2"></span>
        <span class="cell c3"></span>
        <div class="cell nav">
          ${nav("First sheet", svg`<path d="M0 0h2v14H0zM12 0v14L4 7z" />`)}
          ${nav("Previous sheet", svg`<path d="M10 0v14L1 7z" />`)}
          ${nav("Next sheet", svg`<path d="M4 0v14l9-7z" />`)}
          ${nav("Last sheet", svg`<path d="M12 0h2v14h-2zM2 0v14l8-7z" />`)}
        </div>
        <div class="cell modes">
          <button aria-label="Sheet sorter">
            ${icon(22, 22, svg`<path d="M3 0v22M11 0v22M19 0v22" stroke="#b9b9b9" stroke-width="6" stroke-dasharray="6 2" />`)}
          </button>
          <button aria-label="Filmstrip">
            ${icon(22, 22, svg`<path d="M0 7h22" stroke="#b9b9b9" stroke-width="14" /><path d="M0 19h22" stroke="#b9b9b9" stroke-width="6" stroke-dasharray="6 2" />`)}
          </button>
          <button aria-label="Tabs">
            ${icon(22, 22, svg`<rect width="22" height="22" rx="1" fill="#666" stroke="none" />`)}
          </button>
        </div>
      </div>
    `;
  }
}

/* ---------- taskbar ---------- */

@customElement("task-bar")
class TaskBar extends LitElement {
  static styles = [
    shared,
    css`
      :host {
        display: block;
        color: #fff;
      }
      .bar {
        display: flex;
        height: 81px;
        background: linear-gradient(90deg, #24363f 0, #27373f 25%, #28323d 50%, #1f2e3e 65%, #1c2a3c 85%, #1b2742);
      }
      .start {
        width: 97px;
        display: grid;
        place-items: center;
      }
      .search {
        display: flex;
        align-items: center;
        gap: 22px;
        width: 575px;
        padding-left: 25px;
        background: #f2f2f2;
        border-top: 2px solid #c4c4c4;
        border-bottom: 2px solid #c4c4c4;
        color: #222;
        font-size: 28px;
      }
      .search input {
        flex: 1;
        min-width: 0;
        outline: 0;
      }
      .search input::placeholder {
        color: #222;
      }
      .apps {
        display: flex;
        flex: 1;
      }
      .app {
        width: 98px;
        display: grid;
        place-items: center;
      }
      .running {
        background: #535d67;
        border-bottom: 4px solid #76b9ed;
      }
      .tile {
        display: grid;
        place-items: center;
        width: 44px;
        height: 44px;
        background: #f6f6f6;
        border-radius: 2px;
      }
      .tray {
        display: flex;
        align-items: center;
      }
      .tray .icon {
        margin-right: 15px;
      }
      .tray .news {
        margin-right: 34px;
      }
      .tray .up {
        margin-right: 18px;
      }
      .clock {
        width: 106px;
        margin: 0 35px 0 0;
        text-align: center;
        font-size: 22px;
        line-height: 36px;
      }
      .edge {
        width: 11px;
        height: 100%;
        border-left: 2px solid #8a929b;
        margin-left: 8px;
      }
      .count {
        font-family: "Open Sans", sans-serif;
        font-size: 22px;
        text-anchor: middle;
      }
    `,
  ];

  render() {
    return html`<footer class="bar">
      <button class="start" aria-label="Start">
        <svg class="icon" width="34" height="34" viewBox="0 0 34 34" fill="#fff" aria-hidden="true">
          <path d="M0 5l14-2v13H0zM16 3l18-3v16H16zM0 18h14v13L0 29zM16 18h18v16l-18-3z" />
        </svg>
      </button>
      <label class="search">
        <svg class="icon" width="32" height="34" viewBox="0 0 32 34" fill="none" stroke="#222" stroke-width="2" aria-hidden="true">
          <circle cx="20" cy="12" r="10" /><path d="M13 20L1 33" />
        </svg>
        <input type="text" placeholder="Type here to search" aria-label="Search the desktop" />
      </label>
      <div class="apps">
        <button class="app" aria-label="Task view">
          <svg class="icon" width="34" height="32" viewBox="0 0 34 32" fill="none" stroke="#fff" stroke-width="2" aria-hidden="true">
            <path d="M2 1v5h20V1M2 11h20v11H2zM2 31v-5h20v5M30 1v30" /><path d="M27 10h6v6h-6z" fill="#fff" stroke="none" />
          </svg>
        </button>
        <button class="app" aria-label="Edge">
          <svg class="icon" width="48" height="48" viewBox="0 0 48 48" aria-hidden="true">
            <defs>
              <linearGradient id="wave" x1="0" y1=".3" x2="1" y2=".6">
                <stop offset="0" stop-color="#2c9be0" /><stop offset=".5" stop-color="#3cc0d8" /><stop offset="1" stop-color="#7ee06a" />
              </linearGradient>
              <linearGradient id="deep" x1="0" y1="0" x2="1" y2="1">
                <stop offset="0" stop-color="#2a94de" /><stop offset="1" stop-color="#123f86" />
              </linearGradient>
            </defs>
            <path d="M1 22C2 9 12 0 25 0c13 0 22 9 22 20 0 8-6 13-13 13-5 0-7-2-6-4 2-2 2-4 2-6 0-5-5-9-12-9-8 0-15 4-17 8z" fill="url(#wave)" />
            <path d="M1 22c2-4 9-8 17-8 5 0 9 2 11 5-9-3-15 4-15 12 0 7 4 13 10 17C11 48 0 38 1 22z" fill="#2383d6" />
            <path d="M14 31c0-6 3-11 8-13-1 2-2 4-2 7 0 8 7 14 15 14 4 0 7-2 9-3 1 0 1 0 0 2-4 6-11 10-19 10-7-3-11-10-11-17z" fill="url(#deep)" />
          </svg>
        </button>
        <button class="app" aria-label="File Explorer">
          <svg class="icon" width="44" height="38" viewBox="0 0 44 38" aria-hidden="true">
            <path d="M0 2h18l4 5H0z" fill="#e0a030" /><path d="M0 6h44v30H0z" fill="#f9d470" />
            <path d="M8 24c0-3 2-5 5-5h18c3 0 5 2 5 5v13h-8V27H16v10H8z" fill="#4a90d8" />
          </svg>
        </button>
        <button class="app" aria-label="Store">
          <svg class="icon" width="46" height="46" viewBox="0 0 46 46" aria-hidden="true">
            <path d="M13 12V4c0-2 1-3 3-3h14c2 0 3 1 3 3v8" fill="none" stroke="#3a9ae0" stroke-width="3" />
            <path d="M0 10h46v29c0 4-3 7-7 7H7c-4 0-7-3-7-7z" fill="#f4f4f4" />
            <path d="M13 18h9v9h-9z" fill="#e8512c" /><path d="M24 18h9v9h-9z" fill="#7db82e" />
            <path d="M13 29h9v9h-9z" fill="#2ea2e6" /><path d="M24 29h9v9h-9z" fill="#f6b829" />
          </svg>
        </button>
        <button class="app" aria-label="Mail">
          <svg class="icon" width="48" height="46" viewBox="0 0 48 46" aria-hidden="true">
            <path d="M0 15L24 0l24 15z" fill="#1c5fb4" />
            <path d="M0 15h48v30H0z" fill="#3aa5ea" /><path d="M48 15v30L24 29z" fill="#6cc6f4" />
            <path d="M6 15h36L24 29z" fill="#f4f4f4" />
          </svg>
        </button>
        <button class="app" aria-label="Chrome">
          <svg class="icon" width="48" height="48" viewBox="0 0 48 48" aria-hidden="true">
            <path d="M3 12a24 24 0 0 1 42 0l-21 3-10 10z" fill="#d94a38" />
            <path d="M45 12a24 24 0 0 1-22 36l10-18-9-16z" fill="#f7cb45" />
            <path d="M3 12l11 18 14 5-6 13A24 24 0 0 1 3 12z" fill="#4a9c50" />
            <circle cx="24" cy="24" r="11" fill="#fff" /><circle cx="24" cy="24" r="9" fill="#3f7de8" />
          </svg>
        </button>
        <button class="app running" aria-label="Tableau"><span class="tile">${tableauMark(38, "#4d86b8")}</span></button>
      </div>
      <div class="tray">
        <svg class="icon news" width="50" height="34" viewBox="0 0 50 34" fill="none" stroke="#fff" stroke-width="2" aria-hidden="true">
          <path d="M2 2h40v26M2 2v26c0 3 2 4 4 4h38c3 0 4-2 4-4V7h-6" stroke-width="3" />
          <path d="M7 8h29M8 15h10v9H8zM24 14h12M24 20h12M24 26h12" stroke-width="3" />
        </svg>
        <svg class="icon up" width="26" height="16" viewBox="0 0 26 16" fill="none" stroke="#fff" stroke-width="2" aria-hidden="true">
          <path d="M1 14L13 2l12 12" />
        </svg>
        <svg class="icon" width="34" height="30" viewBox="0 0 34 30" fill="none" stroke="#fff" stroke-width="2" aria-hidden="true">
          <path d="M10 4h22v18H8M21 22v6M14 28h14M2 4h6v6H2zM5 10v17" /><path d="M1 3h8v4H1z" fill="#fff" stroke="none" />
        </svg>
        <svg class="icon" width="34" height="30" viewBox="0 0 34 30" fill="none" stroke="#fff" stroke-width="2" aria-hidden="true">
          <path d="M1 11h5l7-7v22l-7-7H1zM17 11c2 2 2 6 0 8M22 7c4 4 4 12 0 16M27 3c6 6 6 18 0 24" />
        </svg>
        <div class="clock">11:04 AM<br />2/19/2023</div>
        <svg class="icon" width="50" height="50" viewBox="0 0 50 50" aria-hidden="true">
          <path d="M1 1h33v27H20l-4 4v-4H1z" fill="#fff" />
          <path d="M7 9h22M7 15h22M7 21h22" stroke="#1c2a3c" stroke-width="2" />
          <circle cx="33" cy="32" r="16" fill="#333" stroke="#999" stroke-width="2" />
          <text class="count" x="33" y="40" fill="#fff">1</text>
        </svg>
        <span class="edge"></span>
      </div>
    </footer>`;
  }
}

/* ---------- root ---------- */

@customElement("app-root")
class AppRoot extends LitElement {
  @property({ type: Array }) menus = [
    "File", "Data", "Worksheet", "Dashboard", "Story", "Analysis",
    "Map", "Format", "Server", "Window", "Help",
  ];

  static styles = [
    shared,
    css`
      :host {
        display: block;
        font-family: "Open Sans", sans-serif;
      }
      .screen {
        display: flex;
        flex-direction: column;
        height: 100vh;
        overflow: hidden;
      }
      .desktop {
        flex: 1;
        min-height: 0;
        display: flex;
        position: relative;
        padding: 18px 6px 27px 14px;
        background:
          linear-gradient(rgb(0 0 0 / 20%), transparent 22px),
          linear-gradient(90deg, #45a4f0 0, #4aaef2 20%, #4098e5 45%, #2f78d5 60%, #2463c6 70%, #174cb6 83%, #1240ae);
      }
      .shortcut {
        position: absolute;
        left: 177px;
        top: 0;
      }
      .window {
        flex: 1;
        min-width: 0;
        display: flex;
        flex-direction: column;
        background: #f5f5f5;
        border: 1px solid #1f4a73;
        box-shadow: 0 1px 1px rgb(0 0 0 / 50%);
      }
      .title {
        height: 57px;
        display: flex;
        align-items: center;
        gap: 13px;
        padding: 0 34px 0 17px;
        background: linear-gradient(#f4f4f4, #fff 14px);
        color: #111;
        font-size: 22px;
      }
      .controls {
        margin-left: auto;
        display: flex;
        align-items: center;
        gap: 70px;
      }
      .menu {
        height: 42px;
        display: flex;
        align-items: center;
        gap: 33px;
        padding: 3px 16px 0;
        background: #fff;
        color: #111;
        font-size: 22px;
      }
      .work {
        flex: 1;
        min-height: 0;
        display: grid;
        grid-template-columns: 613px 307px minmax(0, 1fr);
        grid-template-rows: minmax(0, 1fr);
      }
      .cards {
        margin-left: 13px;
        width: 307px;
      }
      .sheet {
        margin: 0 12px 13px 25px;
      }
    `,
  ];

  render() {
    return html`<div class="screen">
      <mac-menu-bar></mac-menu-bar>
      <main class="desktop">
        <svg class="shortcut" width="92" height="6" viewBox="0 0 92 6" aria-hidden="true">
          <path d="M0 0h25v6H0z" fill="#d8dcdc" /><path d="M8 0l3 4 3-4z" fill="#2a5a9a" />
          <path d="M26 0h65l-3 4H26z" fill="#d2d6d6" />
        </svg>
        <div class="window">
          <header class="title">
            ${tableauMark(28, "#4580ad")} Tableau - praful
            <div class="controls">
              <button aria-label="Minimize">${icon(22, 22, svg`<path d="M1 12h20" stroke="#111" />`)}</button>
              <button aria-label="Maximize">${icon(22, 22, svg`<path d="M1 1h20v19H1z" stroke="#111" />`)}</button>
              <button aria-label="Close">${icon(22, 22, svg`<path d="M1 1l20 20M21 1L1 21" stroke="#111" />`)}</button>
            </div>
          </header>
          <nav class="menu">${this.menus.map((m) => html`<button>${m}</button>`)}</nav>
          <sheet-toolbar></sheet-toolbar>
          <div class="work">
            <data-pane></data-pane>
            <shelf-cards class="cards"></shelf-cards>
            <bubble-sheet class="sheet"></bubble-sheet>
          </div>
          <sheet-tabs></sheet-tabs>
        </div>
      </main>
      <task-bar></task-bar>
    </div>`;
  }
}
